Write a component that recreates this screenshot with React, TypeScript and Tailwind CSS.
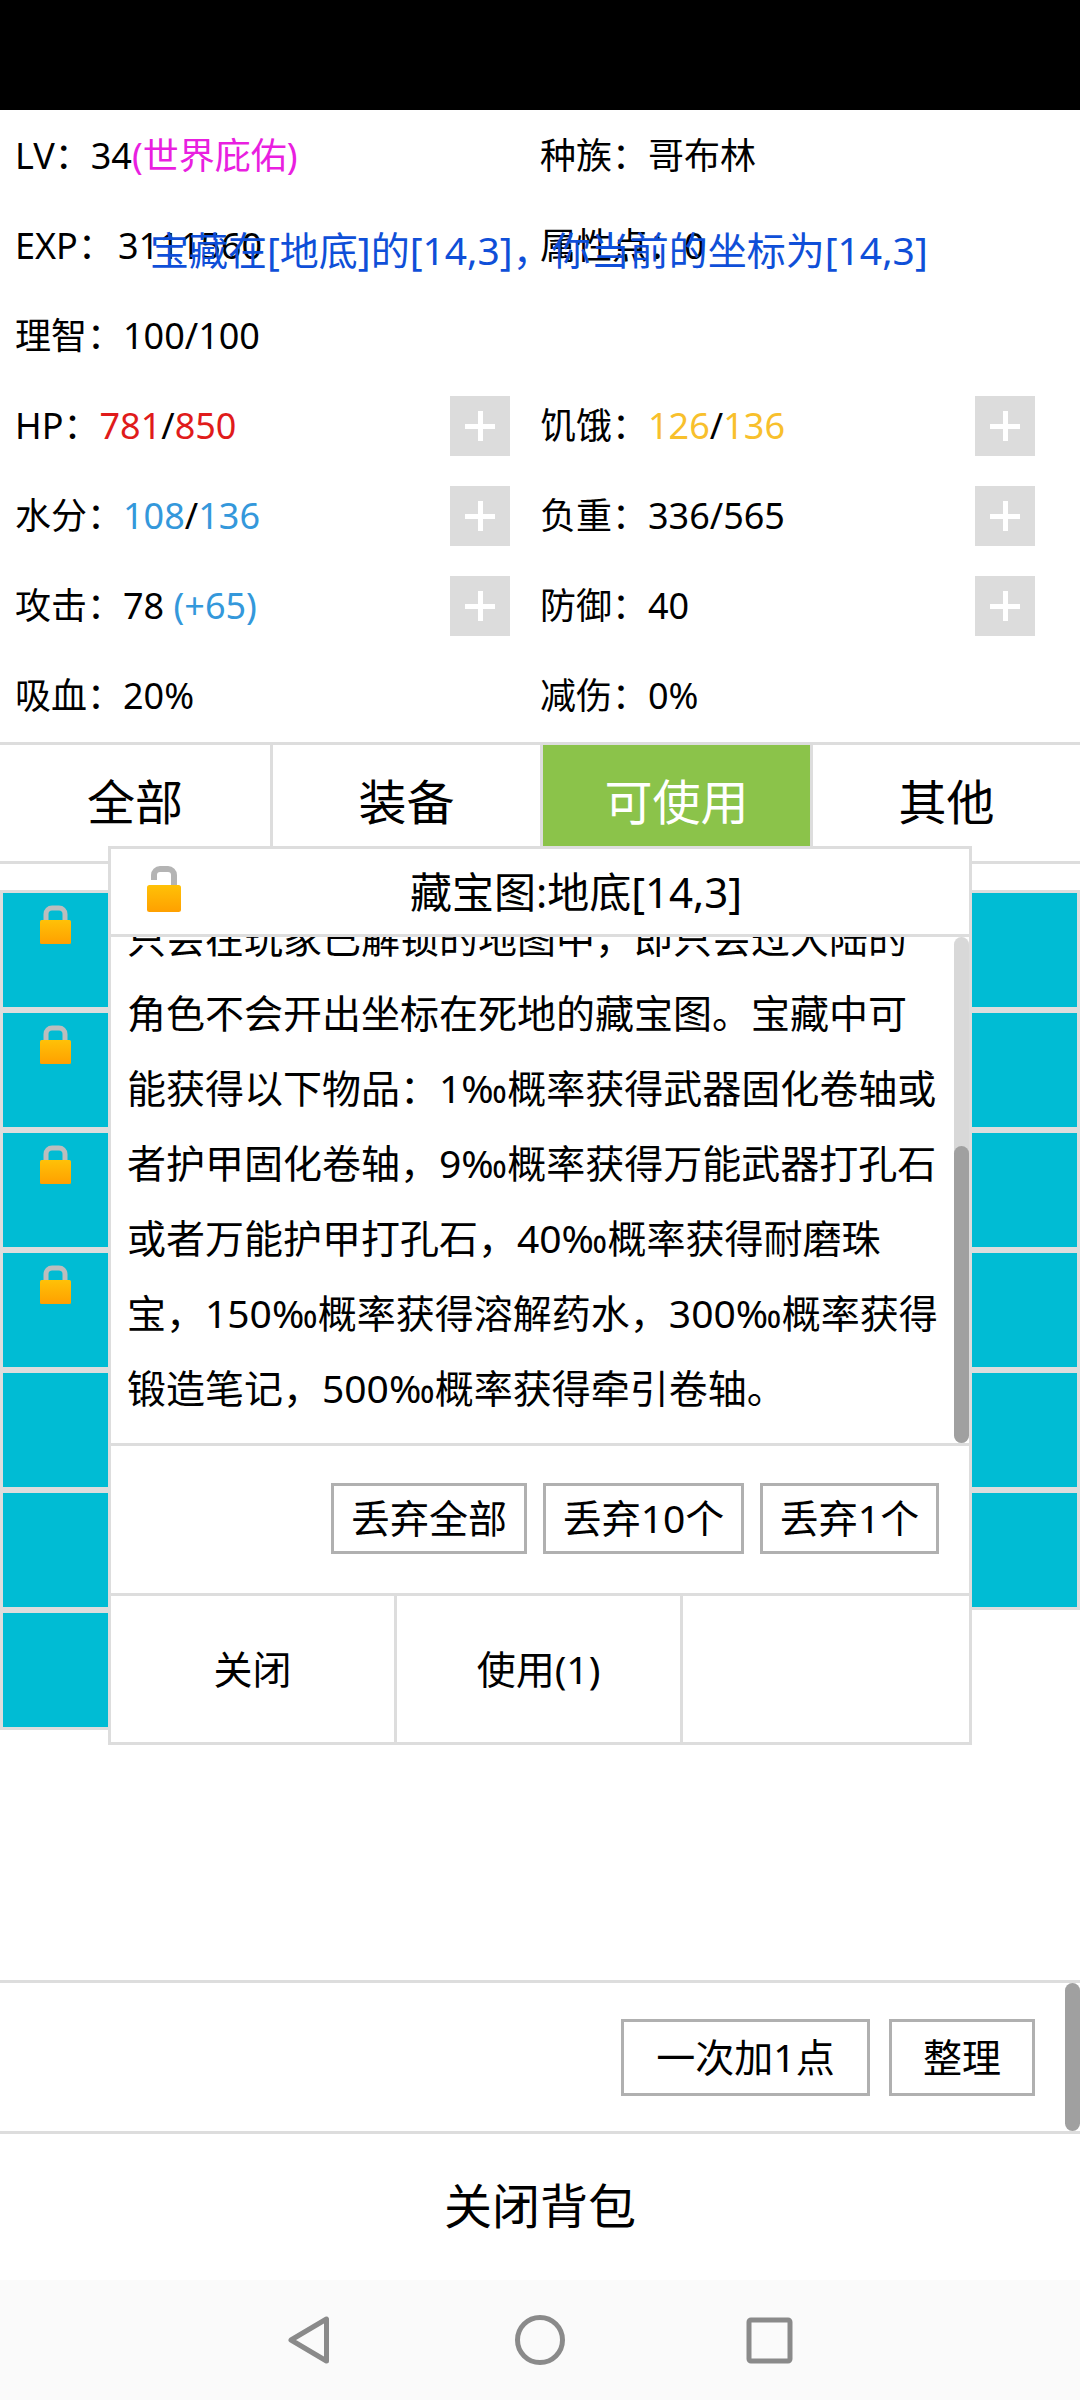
import React from 'react';

const font = { fontFamily: '"Noto Sans", "Noto Sans CJK SC", sans-serif' };

const Lock: React.FC<{ id: string }> = ({ id }) => (
  <svg viewBox="0 0 31 39" className="w-[31px] h-[39px] ml-[37px] mt-[12px]">
    <defs>
      <linearGradient id={id} x1="0" y1="0" x2="0" y2="1">
        <stop offset="0" stopColor="#ffc107" />
        <stop offset="1" stopColor="#ffa000" />
      </linearGradient>
    </defs>
    <path d="M6 16 V9 A6 6 0 0 1 12 3 H19 A6 6 0 0 1 25 9 V16" fill="none" stroke="#bdbdbd" strokeWidth="5" />
    <rect x="0" y="15" width="31" height="24" rx="1.5" fill={`url(#${id})`} />
  </svg>
);

const OpenLock: React.FC = () => (
  <svg viewBox="0 0 34 46" className="w-[34px] h-[46px] ml-[36px] -mt-[5px] shrink-0">
    <defs>
      <linearGradient id="lock-open" x1="0" y1="0" x2="0" y2="1">
        <stop offset="0" stopColor="#ffc107" />
        <stop offset="1" stopColor="#ffa000" />
      </linearGradient>
    </defs>
    <path d="M7 14 V9 A6 6 0 0 1 13 3 H21 A6 6 0 0 1 27 9 V20" fill="none" stroke="#b4b4b4" strokeWidth="6" />
    <rect x="0" y="19" width="34" height="27" rx="2.5" fill="url(#lock-open)" />
  </svg>
);

const Plus: React.FC = () => (
  <div className="relative w-[60px] h-[60px] mt-[2px] bg-[#dcdcdc] flex items-center justify-center">
    <div className="w-[30px] h-[5px] bg-white" />
    <div className="absolute w-[5px] h-[30px] bg-white" />
  </div>
);

const Stat: React.FC<{ children?: React.ReactNode; plus?: boolean; right?: boolean }> = ({ children, plus, right }) => (
  <div
    className={`h-[90px] flex items-center justify-between pl-[15px] text-[36px] text-black whitespace-nowrap ${right ? 'w-[555px] pr-[45px]' : 'w-[525px] pr-[15px]'}`}
  >
    <div className="mt-[1px]">{children}</div>
    {plus && <Plus />}
  </div>
);

const tabs = ['全部', '装备', '可使用', '其他'];

const lines = [
  '只会在玩家已解锁的地图中，即只会过大陆的',
  '角色不会开出坐标在死地的藏宝图。宝藏中可',
  '能获得以下物品：1‰概率获得武器固化卷轴或',
  '者护甲固化卷轴，9‰概率获得万能武器打孔石',
  '或者万能护甲打孔石，40‰概率获得耐磨珠',
  '宝，150‰概率获得溶解药水，300‰概率获得',
  '锻造笔记，500‰概率获得牵引卷轴。',
];

export default function App() {
  return (
    <div className="relative w-[1080px] h-[2400px] bg-white overflow-hidden" style={font}>
      <div className="h-[110px] bg-black" />

      {/* Stats */}
      <div className="flex flex-wrap h-[630px]">
        <Stat>LV：34<span className="text-[#e91fe0]">(世界庇佑)</span></Stat>
        <Stat right>种族：哥布林</Stat>
        <Stat>EXP：<span className="ml-[4px]">3111560</span></Stat>
        <Stat right>属性点：0</Stat>
        <Stat>理智：100/100</Stat>
        <Stat right />
        <Stat plus>HP：<span className="text-[#e01b1b]">781</span>/<span className="text-[#e01b1b]">850</span></Stat>
        <Stat plus right>饥饿：<span className="text-[#f8c02c]">126</span>/<span className="text-[#f8c02c]">136</span></Stat>
        <Stat plus>水分：<span className="text-[#3498db]">108</span>/<span className="text-[#3498db]">136</span></Stat>
        <Stat plus right>负重：336/565</Stat>
        <Stat plus>攻击：78 <span className="text-[#3498db]">(+65)</span></Stat>
        <Stat plus right>防御：40</Stat>
        <Stat>吸血：20%</Stat>
        <Stat right>减伤：0%</Stat>
      </div>

      {/* Tabs */}
      <div className="flex h-[122px] mt-[2px] border-y-[3px] border-[#dddddd]">
        {tabs.map((t, i) => (
          <div
            key={t}
            className={`w-[270px] flex items-center justify-center text-[48px] pb-[2px] ${i > 0 ? 'border-l-[3px] border-[#dddddd]' : ''} ${t === '可使用' ? 'bg-[#8bc34a] text-white' : 'text-black'}`}
          >
            {t}
          </div>
        ))}
      </div>

      {/* Backpack grid */}
      <div className="pt-[26px]">
        <div className="grid grid-cols-9 content-start">
          {Array.from({ length: 55 }).map((_, i) => (
            <div key={i} className="h-[120px] bg-[#00bcd4] border-[3px] border-[#dddddd]">
              {i % 9 === 0 && i < 36 && <Lock id={`lock-${i}`} />}
            </div>
          ))}
        </div>
      </div>

      {/* Bottom actions */}
      <div className="absolute left-0 right-0 top-[1980px] h-[154px] border-y-[3px] border-[#dddddd] flex items-center justify-end gap-[19px] pr-[45px]">
        <div className="w-[249px] h-[77px] border-[3px] border-[#b0b0b0] flex items-center justify-center text-[39px] text-black">一次加1点</div>
        <div className="w-[146px] h-[77px] border-[3px] border-[#b0b0b0] flex items-center justify-center text-[39px] text-black">整理</div>
        <div className="absolute right-0 top-0 bottom-0 w-[15px] rounded-full bg-[#a0a0a0]" />
      </div>
      <div className="absolute left-0 right-0 top-[2134px] h-[146px] pb-[3px] flex items-center justify-center text-[48px] text-black">关闭背包</div>

      {/* Android nav bar */}
      <div className="absolute left-0 right-0 top-[2280px] h-[120px] bg-[#fafafa]">
        <svg viewBox="0 0 1080 120" className="w-full h-full">
          <path d="M326.5 39 V81 L291 60 Z" fill="none" stroke="#8a8a8a" strokeWidth="5" strokeLinejoin="round" />
          <circle cx="540" cy="60" r="22.5" fill="none" stroke="#8a8a8a" strokeWidth="5" />
          <rect x="749" y="40" width="41" height="41" rx="2" fill="none" stroke="#8a8a8a" strokeWidth="5" />
        </svg>
      </div>

      {/* Toast */}
      <div className="absolute left-[150px] top-[220px] text-[39px] text-[#0f4fd8] whitespace-nowrap leading-[60px]">
        宝藏在[地底]的[14,3]，你当前的坐标为[14,3]
      </div>

      {/* Item dialog */}
      <div className="absolute left-[108px] top-[846px] w-[864px] h-[899px] bg-white border-[3px] border-[#dddddd] flex flex-col">
        <div className="h-[88px] shrink-0 flex items-center border-b-[3px] border-[#dddddd]">
          <OpenLock />
          <div className="flex-1 text-center text-[42px] text-black -mt-[1px] pl-[2px]">藏宝图:地底[14,3]</div>
        </div>
        <div className="relative h-[506px] shrink-0 overflow-hidden">
          <div className="-mt-[37px] pl-[16px] text-[39px] leading-[75px] text-black whitespace-nowrap">
            {lines.map((l) => (
              <div key={l}>{l}</div>
            ))}
          </div>
          <div className="absolute right-0 top-0 bottom-0 w-[15px] rounded-full bg-[#d8d8d8]">
            <div className="absolute left-0 right-0 top-[209px] bottom-0 rounded-full bg-[#a0a0a0]" />
          </div>
        </div>
        <div className="h-[150px] shrink-0 border-t-[3px] border-[#dddddd] flex items-center justify-end gap-[16px] pr-[30px] pb-[3px] text-[39px] text-black">
          <div className="w-[196px] h-[71px] border-[3px] border-[#b0b0b0] flex items-center justify-center">丢弃全部</div>
          <div className="w-[201px] h-[71px] border-[3px] border-[#b0b0b0] flex items-center justify-center">丢弃10个</div>
          <div className="w-[179px] h-[71px] border-[3px] border-[#b0b0b0] flex items-center justify-center">丢弃1个</div>
        </div>
        <div className="flex-1 flex border-t-[3px] border-[#dddddd] text-[39px] text-black">
          <div className="w-[286px] flex items-center justify-center border-r-[3px] border-[#dddddd]">关闭</div>
          <div className="w-[286px] flex items-center justify-center border-r-[3px] border-[#dddddd]">使用(1)</div>
          <div className="flex-1" />
        </div>
      </div>
    </div>
  );
}
